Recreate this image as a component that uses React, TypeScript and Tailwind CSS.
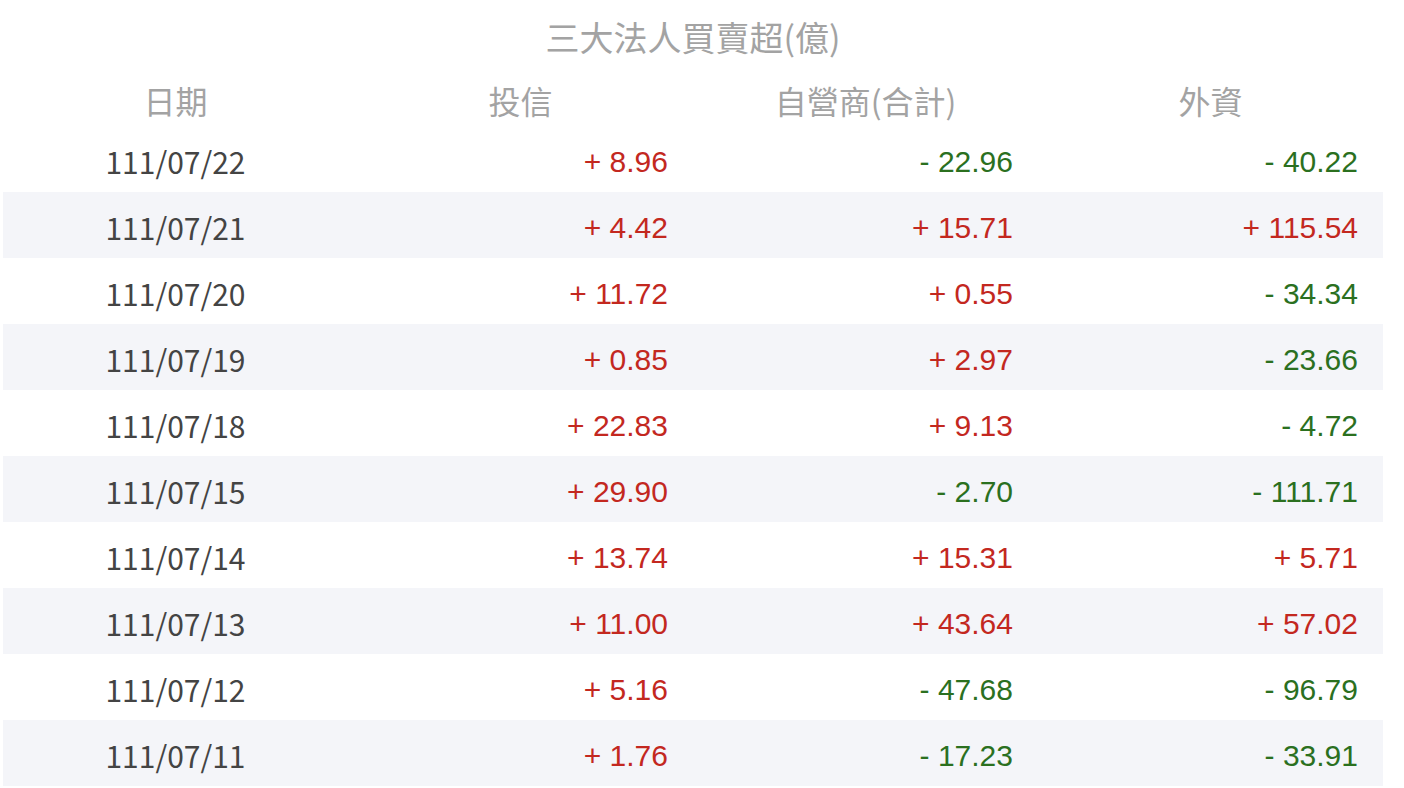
const rows: [string, string, string, string][] = [
  ["111/07/22", "+ 8.96", "- 22.96", "- 40.22"],
  ["111/07/21", "+ 4.42", "+ 15.71", "+ 115.54"],
  ["111/07/20", "+ 11.72", "+ 0.55", "- 34.34"],
  ["111/07/19", "+ 0.85", "+ 2.97", "- 23.66"],
  ["111/07/18", "+ 22.83", "+ 9.13", "- 4.72"],
  ["111/07/15", "+ 29.90", "- 2.70", "- 111.71"],
  ["111/07/14", "+ 13.74", "+ 15.31", "+ 5.71"],
  ["111/07/13", "+ 11.00", "+ 43.64", "+ 57.02"],
  ["111/07/12", "+ 5.16", "- 47.68", "- 96.79"],
  ["111/07/11", "+ 1.76", "- 17.23", "- 33.91"],
];

const cjk = "font-['Noto_Sans_CJK_TC','Noto_Sans',sans-serif]";

function Value({ v }: { v: string }) {
  const up = v.startsWith("+");
  return (
    <div
      className={`flex items-center justify-end pt-[5px] pr-[25px] font-['Liberation_Sans',Arial,sans-serif] text-[30px] ${
        up ? "text-[#c3281f]" : "text-[#2b701f]"
      }`}
    >
      {v}
    </div>
  );
}

export default function App() {
  return (
    <div className="w-[1404px] h-[788px] bg-white overflow-hidden">
      <div className="mx-[3px] w-[1380px]">
        <div className={`h-[70px] flex items-center justify-center pt-[2px] text-[34px] text-[#a3a3a3] ${cjk}`}>
          三大法人買賣超(億)
        </div>
        <div className={`grid grid-cols-4 h-[56px] items-center pt-[4px] text-center text-[32px] text-[#a3a3a3] ${cjk}`}>
          <div>日期</div>
          <div>投信</div>
          <div>自營商(合計)</div>
          <div>外資</div>
        </div>
        {rows.map((r, i) => (
          <div key={r[0]} className={`grid grid-cols-4 h-[66px] ${i % 2 === 1 ? "bg-[#f4f5f9]" : "bg-white"}`}>
            <div className={`flex items-center justify-center pt-[5px] text-[30px] text-[#444444] ${cjk}`}>{r[0]}</div>
            <Value v={r[1]} />
            <Value v={r[2]} />
            <Value v={r[3]} />
          </div>
        ))}
      </div>
    </div>
  );
}
